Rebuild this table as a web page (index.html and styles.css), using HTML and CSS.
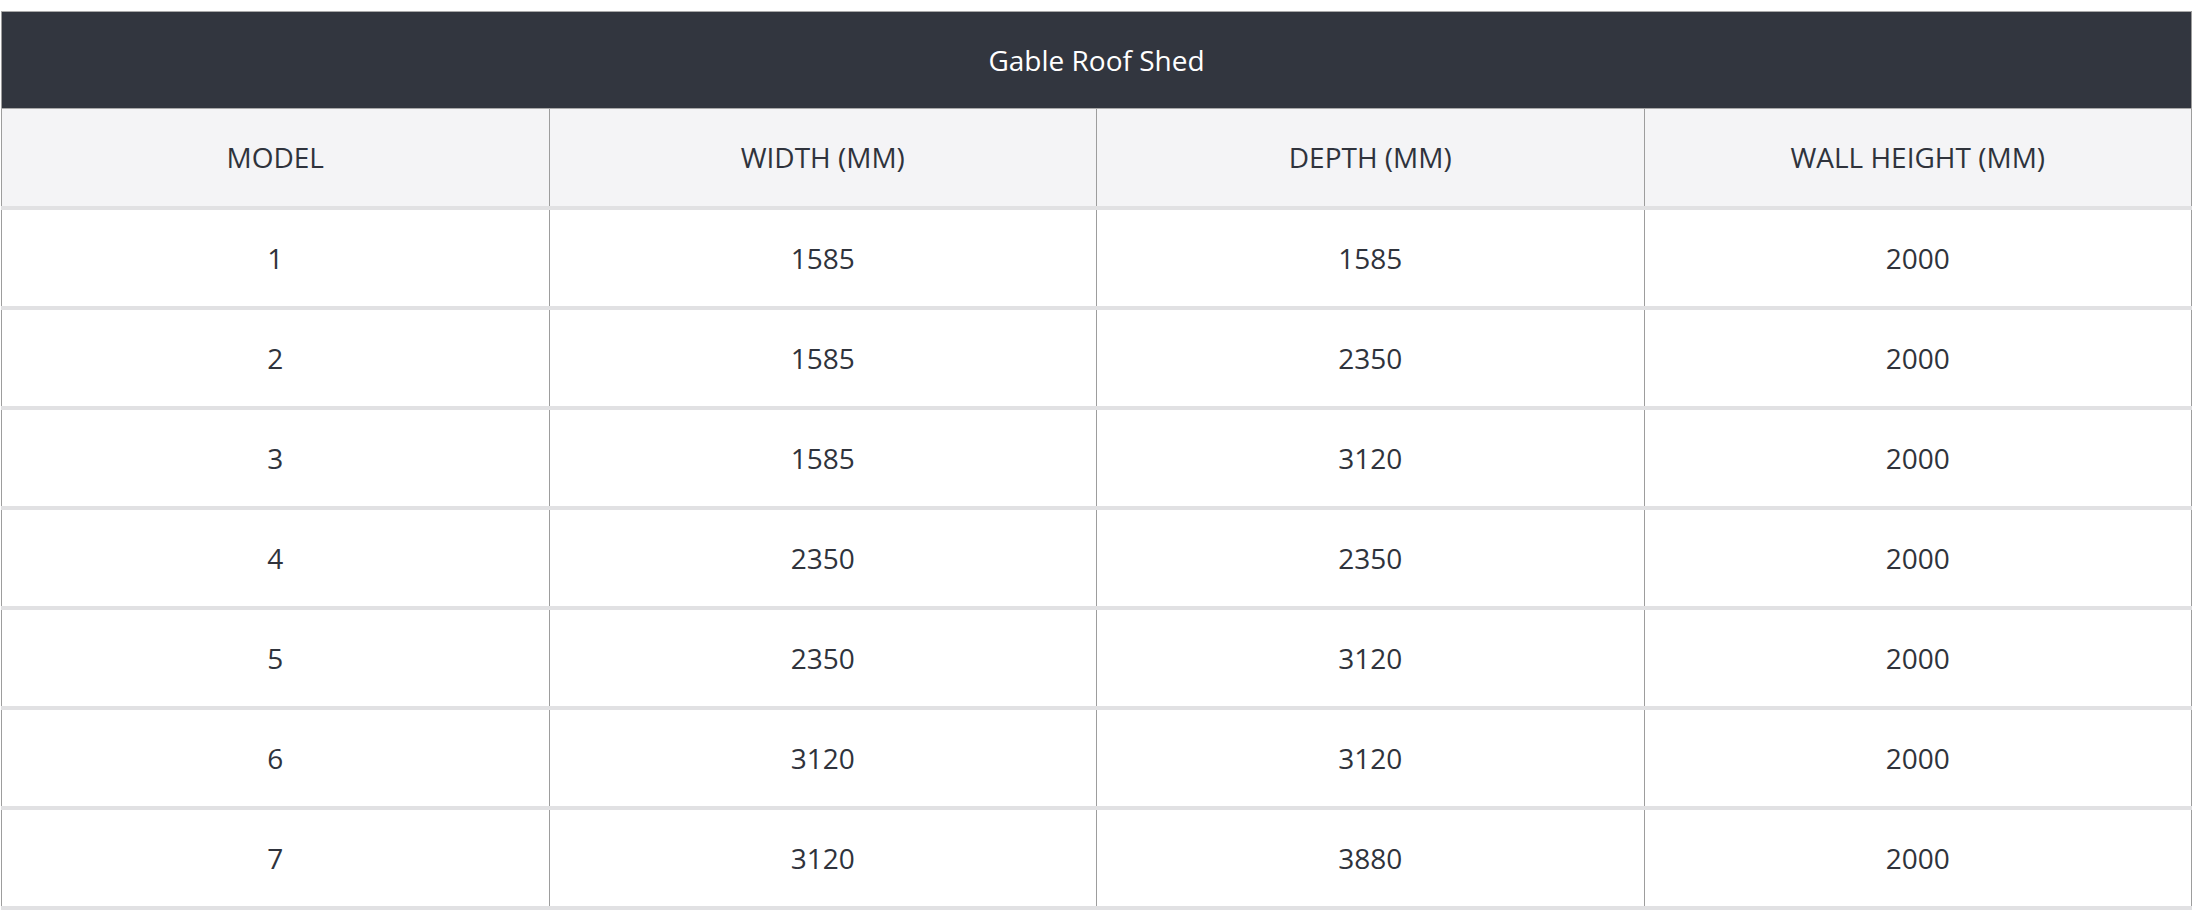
FILE: index.html
```html
<!DOCTYPE html>
<html>
<head>
<meta charset="utf-8">
<title>Gable Roof Shed</title>
<link rel="stylesheet" href="styles.css">
</head>
<body>
<div class="page">
  <table class="spec">
    <thead>
      <tr><th class="spec-title" colspan="4">Gable Roof Shed</th></tr>
      <tr class="spec-head">
        <th>MODEL</th>
        <th>WIDTH (MM)</th>
        <th>DEPTH (MM)</th>
        <th>WALL HEIGHT (MM)</th>
      </tr>
    </thead>
    <tbody>
      <tr><td>1</td><td>1585</td><td>1585</td><td>2000</td></tr>
      <tr><td>2</td><td>1585</td><td>2350</td><td>2000</td></tr>
      <tr><td>3</td><td>1585</td><td>3120</td><td>2000</td></tr>
      <tr><td>4</td><td>2350</td><td>2350</td><td>2000</td></tr>
      <tr><td>5</td><td>2350</td><td>3120</td><td>2000</td></tr>
      <tr><td>6</td><td>3120</td><td>3120</td><td>2000</td></tr>
      <tr><td>7</td><td>3120</td><td>3880</td><td>2000</td></tr>
    </tbody>
  </table>
</div>
</body>
</html>
```
FILE: styles.css
```css
html, body {
  margin: 0;
  padding: 0;
  background: #ffffff;
}

.page {
  padding: 11px 10px 0 1px;
}

.spec {
  width: 2191px;
  border-collapse: collapse;
  table-layout: fixed;
  font-family: "Open Sans", "Noto Sans", sans-serif;
  font-size: 28px;
  color: #2f333c;
}

.spec th,
.spec td {
  padding: 0;
  text-align: center;
  font-weight: 400;
  border-left: 1px solid #9d9d9d;
  border-right: 1px solid #9d9d9d;
}

.spec-title {
  background: #32363f;
  color: #ffffff;
  line-height: 96px;
  border-top: 1px solid #a9a9a9;
  border-bottom: 1px solid #a9a9a9;
}

.spec-head th {
  background: #f4f4f6;
  line-height: 97px;
  border-bottom: 4px solid #e1e1e3;
}

.spec td {
  background: #ffffff;
  line-height: 96px;
  border-bottom: 4px solid #e1e1e3;
}
```
